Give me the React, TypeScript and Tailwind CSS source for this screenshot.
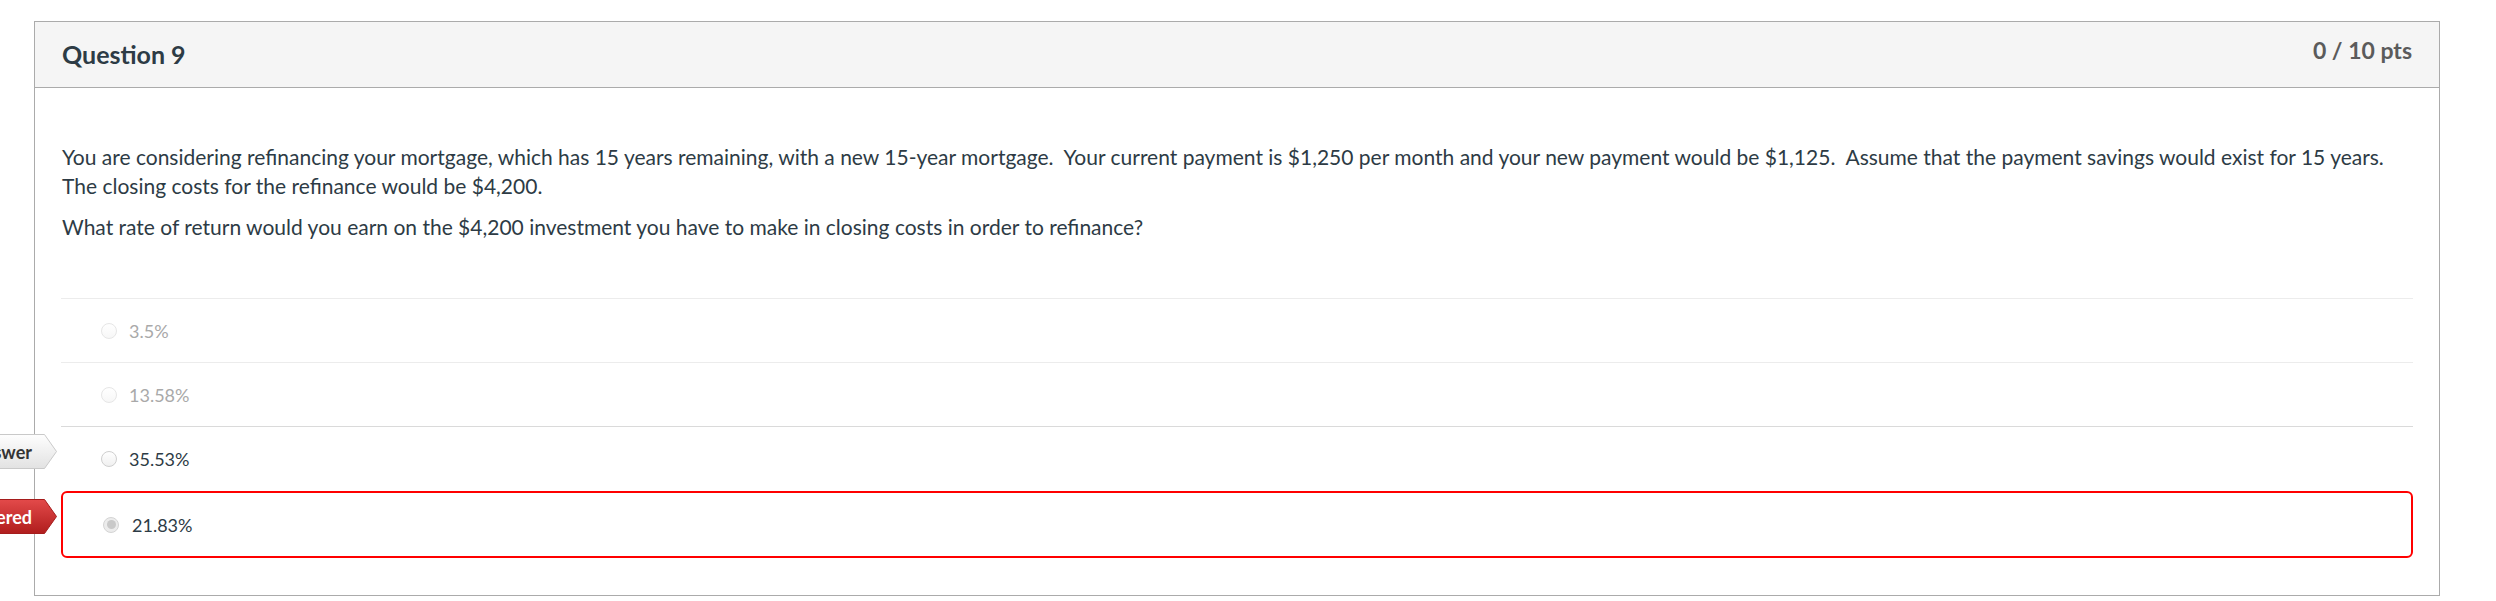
import React from "react";

function Radio({ selected, faded }: { selected?: boolean; faded?: boolean }) {
  if (selected) {
    return (
      <div className="flex h-4 w-4 shrink-0 items-center justify-center rounded-full border border-[#d4d4d4] bg-[#ececec]">
        <div className="h-[9px] w-[9px] rounded-full bg-[#c9c9c9]" />
      </div>
    );
  }
  return (
    <div
      className={
        faded
          ? "h-4 w-4 shrink-0 rounded-full border border-[#e6e6e6] bg-gradient-to-b from-white to-[#f7f7f7]"
          : "h-4 w-4 shrink-0 rounded-full border border-[#cfcfcf] bg-gradient-to-b from-white to-[#f0f0f0]"
      }
    />
  );
}

function ArrowLabel({ text, red, topClass }: { text: string; red?: boolean; topClass: string }) {
  const w = 160;
  const h = 35;
  return (
    <div className={`absolute left-0 flex w-[57px] justify-end ${topClass}`}>
      <div className="relative h-[35px] w-[160px] shrink-0">
        <svg className="absolute inset-0" width={w} height={h} viewBox={`0 0 ${w} ${h}`}>
          <defs>
            <linearGradient id={red ? "lblred" : "lblgray"} x1="0" y1="0" x2="0" y2="1">
              {red ? (
                <>
                  <stop offset="0" stopColor="#e34a4a" />
                  <stop offset="1" stopColor="#b01d1d" />
                </>
              ) : (
                <>
                  <stop offset="0" stopColor="#fefefe" />
                  <stop offset="1" stopColor="#e2e2e2" />
                </>
              )}
            </linearGradient>
          </defs>
          <polygon
            points={`0.5,0.5 ${w - 12.5},0.5 ${w - 0.5},${h / 2} ${w - 12.5},${h - 0.5} 0.5,${h - 0.5}`}
            fill={`url(#${red ? "lblred" : "lblgray"})`}
            stroke={red ? "#a51c1c" : "#c9c9c9"}
            strokeWidth="1"
          />
        </svg>
        <div className="absolute inset-y-0 right-[25px] flex items-center">
          <span
            className={
              red
                ? "whitespace-nowrap text-[18px] font-bold leading-none text-white"
                : "whitespace-nowrap text-[18px] font-bold leading-none text-[#333]"
            }
          >
            {text}
          </span>
        </div>
      </div>
    </div>
  );
}

export default function App() {
  return (
    <div className="relative h-[601px] w-[2496px] overflow-hidden bg-white font-['Lato',sans-serif]">
      <div className="ml-[34px] mt-[21px] w-[2406px] border border-[#ababab]">
        <div className="flex h-[66px] justify-between border-b border-[#ababab] bg-[#f5f5f5] px-[27px]">
          <div className="mt-[20px] text-[25px] font-bold leading-[25px] text-[#2d3b45]">Question 9</div>
          <div className="mt-[17px] text-[23px] font-bold leading-[23px] text-[#5b5b5b]">0 / 10 pts</div>
        </div>
        <div className="px-[26px] pb-[37px] pt-[54px]">
          <div className="pl-px text-[21px] leading-[29px] text-[#2d3b45]">
            <p className="mb-3">
              You are considering refinancing your mortgage, which has 15 years remaining, with a new 15-year
              mortgage.{"\u00a0 "}Your current payment is $1,250 per month and your new payment would be
              $1,125.{"\u00a0 "}Assume that the payment savings would exist for 15 years. The closing costs for
              the refinance would be $4,200.
            </p>
            <p>
              What rate of return would you earn on the $4,200 investment you have to make in closing costs in
              order to refinance?
            </p>
          </div>
          <div className="mt-[57px]">
            <div className="flex h-[64px] items-center border-t border-[#ececec] pl-[40px]">
              <Radio faded />
              <span className="ml-[12px] text-[18px] leading-none text-[#a9a9a9]">3.5%</span>
            </div>
            <div className="flex h-[64px] items-center border-t border-[#ececec] pl-[40px]">
              <Radio faded />
              <span className="ml-[12px] text-[18px] leading-none text-[#a9a9a9]">13.58%</span>
            </div>
            <div className="flex h-[65px] items-center border-t border-[#dadada] pl-[40px]">
              <Radio />
              <span className="ml-[12px] text-[18px] leading-none text-[#2d3b45]">35.53%</span>
            </div>
            <div className="flex h-[67px] items-center rounded-[6px] border-2 border-[#ff0000] pl-[40px]">
              <Radio selected />
              <span className="ml-[13px] text-[18px] leading-none text-[#2d3b45]">21.83%</span>
            </div>
          </div>
        </div>
      </div>
      <ArrowLabel text="Correct Answer" topClass="top-[434px]" />
      <ArrowLabel text="You Answered" red topClass="top-[499px]" />
    </div>
  );
}
